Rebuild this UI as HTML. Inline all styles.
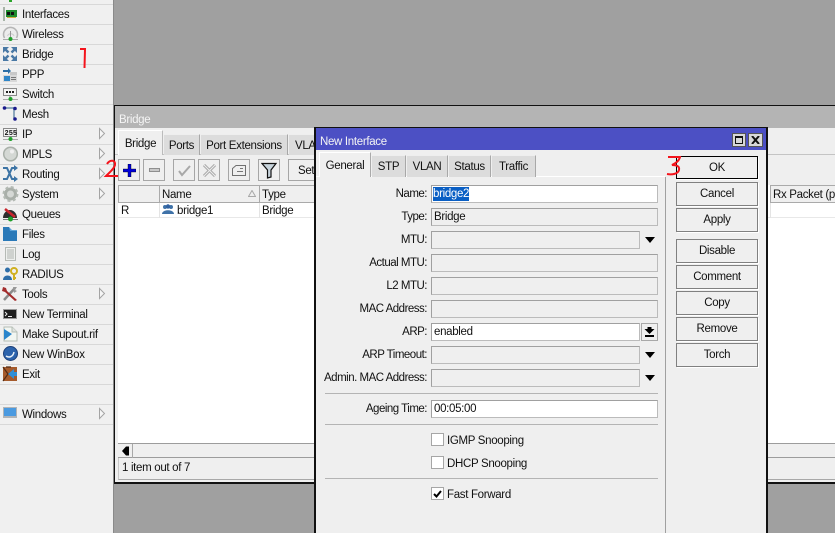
<!DOCTYPE html>
<html><head><meta charset="utf-8"><style>
html,body{margin:0;padding:0;width:835px;height:533px;overflow:hidden}
body{background:#a0a0a0;font:11.5px/14px "Liberation Sans",sans-serif;color:#111;letter-spacing:-.32px}
#r{position:absolute;left:0;top:0;width:835px;height:533px;overflow:hidden;background:#a0a0a0}
#r div{position:absolute;box-sizing:border-box;white-space:nowrap}
.m{left:22px;height:14px;margin-top:1px}
.l{left:0;width:113px;height:1px;background:#d8d8d8}
.tab{top:134px;height:21px;background:#dcdcdc;border-right:1px solid #a8a8a8;border-top:1px solid #eee;text-align:center;line-height:20px;padding-top:1px}
.tb{top:159px;width:22px;height:22px;border:1px solid #a6a6a6;background:#efefef}
.lab{right:408px;text-align:right;height:14px;margin-top:1px;letter-spacing:-.5px}
.f{left:431px;width:227px;height:18px;border:1px solid #a0a0a0;border-right-color:#bbb;border-bottom-color:#bbb;background:#efefef;padding-left:1px;line-height:16px}
.w{background:#fff}
.b{left:676px;width:82px;height:24px;border:1px solid #808080;background:#efefef;text-align:center;line-height:23px;box-shadow:1px 1px 0 #fff}
.s{left:325px;width:333px;height:1px;background:#b4b4b4}
.cb{left:431px;width:13px;height:13px;border:1px solid #a6a6a6;background:#fff}
.h{top:185px;height:18px;border-right:1px solid #aaa;border-bottom:1px solid #aaa;border-top:1px solid #aaa;background:#efefef;padding-left:2px;line-height:18px}
.arr{width:0;height:0;border-left:5px solid transparent;border-right:5px solid transparent;border-top:6px solid #000}
</style></head><body><div id="r">

<!-- sidebar -->
<div style="left:0;top:0;width:114px;height:533px;background:#f0f0f0;border-right:1px solid #8a8a8a"></div>
<div class="l" style="top:4px"></div><div class="l" style="top:24px"></div><div class="l" style="top:44px"></div><div class="l" style="top:64px"></div><div class="l" style="top:84px"></div><div class="l" style="top:104px"></div><div class="l" style="top:124px"></div><div class="l" style="top:144px"></div><div class="l" style="top:164px"></div><div class="l" style="top:184px"></div><div class="l" style="top:204px"></div><div class="l" style="top:224px"></div><div class="l" style="top:244px"></div><div class="l" style="top:264px"></div><div class="l" style="top:284px"></div><div class="l" style="top:304px"></div><div class="l" style="top:324px"></div><div class="l" style="top:344px"></div><div class="l" style="top:364px"></div><div class="l" style="top:384px"></div><div class="l" style="top:404px"></div><div class="l" style="top:424px"></div>

<div class="m" style="top:7px">Interfaces</div>
<div class="m" style="top:27px">Wireless</div>
<div class="m" style="top:47px">Bridge</div>
<div class="m" style="top:67px">PPP</div>
<div class="m" style="top:87px">Switch</div>
<div class="m" style="top:107px">Mesh</div>
<div class="m" style="top:127px">IP</div>
<div class="m" style="top:147px">MPLS</div>
<div class="m" style="top:167px">Routing</div>
<div class="m" style="top:187px">System</div>
<div class="m" style="top:207px">Queues</div>
<div class="m" style="top:227px">Files</div>
<div class="m" style="top:247px">Log</div>
<div class="m" style="top:267px">RADIUS</div>
<div class="m" style="top:287px">Tools</div>
<div class="m" style="top:307px">New Terminal</div>
<div class="m" style="top:327px">Make Supout.rif</div>
<div class="m" style="top:347px">New WinBox</div>
<div class="m" style="top:367px">Exit</div>
<div class="m" style="top:407px">Windows</div>

<svg style="position:absolute;left:0;top:0" width="114" height="430" viewBox="0 0 114 430">
 <!-- submenu arrows -->
 <g fill="#f6f6f6" stroke="#a4a4a4" stroke-width="1">
  <path d="M99.500 128.500V138.500L104.500 133.500Z"/><path d="M99.500 148.500V158.500L104.500 153.500Z"/><path d="M99.500 168.500V178.500L104.500 173.500Z"/><path d="M99.500 188.500V198.500L104.500 193.500Z"/><path d="M99.500 288.500V298.500L104.500 293.500Z"/><path d="M99.500 408.500V418.500L104.500 413.500Z"/>
 </g>
 <!-- Interfaces -->
 <rect x="3" y="7" width="2" height="14" fill="#a8b4a8"/><rect x="6" y="10" width="11" height="7" fill="#1f8a2d"/><rect x="7" y="12" width="3" height="3" fill="#111"/><rect x="11" y="12" width="3" height="3" fill="#111"/><rect x="7" y="17" width="9" height="1" fill="#d0b040"/>
 <rect x="9" y="0" width="3" height="2" fill="#2aa52a"/>
 <!-- Wireless -->
 <path d="M4.500 38A7 7 0 1 1 16.500 38" fill="#ececec" stroke="#b5b5b5" stroke-width="1.500"/><path d="M7.500 36A3.500 3.500 0 0 1 14 36" fill="none" stroke="#ccc"/><rect x="10" y="31" width="1" height="6" fill="#999"/><rect x="3" y="39" width="15" height="1" fill="#aaa"/><circle cx="10.500" cy="39" r="2" fill="#1fa02a"/>
 <!-- Bridge -->
 <g fill="#4a79a5" stroke="none"><path d="M3 47h6l-6 6z"/><path d="M17 47h-6l6 6z"/><path d="M3 61h6l-6-6z"/><path d="M17 61h-6l6-6z"/></g>
 <path d="M5 49L8.500 52.500M15 49L11.500 52.500M5 59L8.500 55.500M15 59L11.500 55.500" stroke="#4a79a5" stroke-width="2.500"/>
 <!-- PPP -->
 <path d="M3 70h5v-2l3 3-3 3v-2H3z" fill="#2c6ea6"/><rect x="3" y="75" width="14" height="7" fill="#d8d8d8"/><rect x="4" y="76" width="6" height="5" fill="#2f86c8"/><rect x="11" y="77" width="5" height="1" fill="#777"/><rect x="11" y="79" width="5" height="1" fill="#777"/><rect x="10" y="72" width="7" height="3" fill="#c8c8c8"/>
 <!-- Switch -->
 <rect x="3.500" y="88.500" width="13" height="7" fill="#f4f4f4" stroke="#888"/><path d="M6 91h2v2H6zM9 91h2v2H9zM12 91h2v2h-2z" fill="#222"/><rect x="9.500" y="96" width="1" height="3" fill="#888"/><rect x="3" y="99" width="15" height="1" fill="#aaa"/><circle cx="10.500" cy="99" r="2" fill="#1fa02a"/>
 <!-- Mesh -->
 <path d="M5 108H14V118" fill="none" stroke="#8ea8bc" stroke-width="2"/><circle cx="4.500" cy="108" r="1.800" fill="#1a1a8c"/><circle cx="15" cy="108.500" r="1.800" fill="#1a1a8c"/><circle cx="15" cy="119" r="1.800" fill="#1a1a8c"/>
 <!-- IP -->
 <rect x="3.500" y="128.500" width="13" height="8" fill="#f4f4f4" stroke="#888"/><text x="4.500" y="135" font-family="Liberation Mono,monospace" font-size="7" font-weight="bold" fill="#111" letter-spacing="0">255</text><rect x="3" y="139" width="15" height="1" fill="#aaa"/><circle cx="10.500" cy="139" r="2" fill="#1fa02a"/>
 <!-- MPLS -->
 <circle cx="10.500" cy="154" r="6.800" fill="#d4d8d4" stroke="#a9b0a9" stroke-width="1.500"/><circle cx="12" cy="151.500" r="2" fill="#f0f0f0"/>
 <!-- Routing -->
 <path d="M3 168h4l5 11h3M3 179h4l5-11h3" fill="none" stroke="#3d74a5" stroke-width="2"/><path d="M14 165l4 3-4 3zM14 176l4 3-4 3z" fill="#3d74a5"/>
 <!-- System -->
 <circle cx="10.500" cy="194" r="5" fill="#d5d8d5" stroke="#a9afa9" stroke-width="3"/><circle cx="10.500" cy="194" r="7" fill="none" stroke="#b4bab4" stroke-width="2" stroke-dasharray="3 2.500"/>
 <!-- Queues -->
 <path d="M3 218A7 8 0 0 1 17 218Z" fill="#2e2e2e"/><path d="M5 209L15 217" stroke="#c8242c" stroke-width="2.500"/><rect x="3" y="219" width="15" height="1" fill="#777"/><circle cx="10.500" cy="219" r="2.500" fill="#1fa02a"/>
 <!-- Files -->
 <path d="M3 227h6l2 3h6v11H3z" fill="#2a79b8"/><path d="M9 227l3 3h5v1H10z" fill="#5ea3d6"/>
 <!-- Log -->
 <rect x="5.500" y="247.500" width="10" height="13" fill="#eef0ee" stroke="#b5bab5"/><path d="M7 250h7M7 252h7M7 254h7M7 256h7M7 258h7" stroke="#b0b4b0"/>
 <!-- RADIUS -->
 <circle cx="7.500" cy="270" r="2.500" fill="#2f6ea8"/><path d="M3 280c0-6 9-6 9 0z" fill="#2f6ea8"/><circle cx="14" cy="271" r="3" fill="none" stroke="#d0b020" stroke-width="2"/><path d="M14 274v6M14 278h2" stroke="#d0b020" stroke-width="2"/>
 <!-- Tools -->
 <path d="M4 300L15 288" stroke="#8a8a8a" stroke-width="2.500"/><path d="M3 287l3 1 1 3 10 9-2 1-10-9-3-1z" fill="#a32c2c"/><path d="M13 287l4 0-2 3 2 1-3 2z" fill="#999"/>
 <!-- Terminal -->
 <rect x="3.500" y="309.500" width="13" height="9" fill="#1e1e1e" stroke="#9a9a9a"/><path d="M5 312l2 2-2 2" stroke="#eee" fill="none"/><rect x="8" y="316" width="4" height="1" fill="#eee"/>
 <!-- Supout -->
 <path d="M4 327h8l5 5v9H4z" fill="#f2f6f2" stroke="#b5bdb5"/><path d="M12 327v5h5" fill="#e0e4e0" stroke="#b5bdb5"/><path d="M4 329l8 5-8 6z" fill="#2a85cc"/>
 <!-- WinBox -->
 <circle cx="10.500" cy="353.500" r="7" fill="#2c63ac"/><circle cx="10.500" cy="353.500" r="7" fill="none" stroke="#1d3f78"/><path d="M6 356c3 2 7 1 8-4" fill="none" stroke="#e8f0f8" stroke-width="1.500"/>
 <!-- Exit -->
 <rect x="3" y="367" width="14" height="14" fill="#a55a2c"/><path d="M3 367l5 7-5 7M6 367l5 0" stroke="#522b14" fill="none" stroke-width="1.200"/><path d="M8 374l6-5v3h3v4h-3v3z" fill="#2e8fd8"/>
 <!-- Windows -->
 <rect x="3" y="407" width="14" height="11" fill="#b0b4b8"/><rect x="4" y="408" width="12" height="8" fill="#4b9ae0"/>
</svg>

<!-- Bridge window -->
<div style="left:114px;top:105px;width:730px;height:379px;background:#efefef;border:1px solid #111;border-bottom-width:2px"></div>
<div style="left:115px;top:106px;width:720px;height:22px;background:#b4b4b4;color:#f4f4f4;padding:7px 0 0 4px">Bridge</div>
<div style="left:115px;top:128px;width:720px;height:31px;background:#efefef"></div>
<div style="left:115px;top:154px;width:720px;height:1px;background:#c4c4c4"></div>
<div class="tab" style="left:118px;top:130px;width:45px;height:25px;background:#efefef;border:1px solid #fff;border-bottom:0;border-right:1px solid #bbb;line-height:25px">Bridge</div>
<div class="tab" style="left:164px;width:36px">Ports</div>
<div class="tab" style="left:201px;width:87px">Port Extensions</div>
<div class="tab" style="left:289px;width:30px;text-align:left;padding-left:6px">VLAN</div>

<div class="tb" style="left:118px"></div>
<svg style="position:absolute;left:123px;top:164px" width="13" height="13"><path d="M5 0h3v5h5v3H8v5H5V8H0V5h5z" fill="#0000d8" stroke="#000" stroke-width=".4"/></svg>
<div class="tb" style="left:143px"></div>
<div style="left:149px;top:168px;width:11px;height:4px;background:#c8c8c8;border:1px solid #8e8e8e"></div>
<div class="tb" style="left:173px"></div>
<svg style="position:absolute;left:178px;top:164px" width="13" height="13"><path d="M1 7l3 4 8-9" fill="none" stroke="#a8a8a8" stroke-width="2"/></svg>
<div class="tb" style="left:198px"></div>
<svg style="position:absolute;left:203px;top:164px" width="13" height="13"><path d="M1 1L12 12M12 1L1 12" fill="none" stroke="#a8a8a8" stroke-width="3"/><path d="M1 1L12 12M12 1L1 12" fill="none" stroke="#eee" stroke-width="1"/></svg>
<div class="tb" style="left:228px"></div>
<svg style="position:absolute;left:232px;top:164px" width="14" height="12"><path d="M.5 4.500L4 1.500H13.500V11.500H.5Z" fill="#efefef" stroke="#707070"/><path d="M8 4.500h3M5 7.500h6" stroke="#777"/></svg>
<div class="tb" style="left:258px"></div>
<svg style="position:absolute;left:261px;top:162px" width="16" height="17"><path d="M1 1.500H15L10 8V15L6.500 16V8Z" fill="#c8d4dc" stroke="#111" stroke-width="1.200"/></svg>
<div class="tb" style="left:288px;width:40px;padding:4px 0 0 9px;line-height:14px">Sett</div>

<!-- table -->
<div style="left:118px;top:185px;width:717px;height:258px;background:#fff"></div>
<div style="left:118px;top:443px;width:717px;height:1px;background:#9c9c9c"></div>
<div class="h" style="left:118px;width:42px;border-left:1px solid #aaa"></div>
<div class="h" style="left:160px;width:100px">Name</div>
<div class="h" style="left:260px;width:60px">Type</div>
<svg style="position:absolute;left:248px;top:190px" width="8" height="7"><path d="M4 .5L7.500 6.500H.5Z" fill="#eee" stroke="#a8a8a8"/></svg>
<div class="h" style="left:770px;width:70px;border-left:1px solid #aaa">Rx Packet (p.</div>
<div style="left:118px;top:203px;width:717px;height:15px;border-bottom:1px solid #e8e8e8"></div>
<div style="left:159px;top:203px;width:1px;height:15px;background:#e4e4e4"></div>
<div style="left:259px;top:203px;width:1px;height:15px;background:#e4e4e4"></div>
<div style="left:770px;top:203px;width:1px;height:15px;background:#e4e4e4"></div>
<div style="left:121px;top:204px">R</div>
<div style="left:177px;top:204px">bridge1</div>
<div style="left:262px;top:204px">Bridge</div>
<svg style="position:absolute;left:162px;top:204px" width="12" height="11"><circle cx="3" cy="3" r="2" fill="#3f72a8"/><circle cx="9" cy="3" r="2" fill="#3f72a8"/><circle cx="6" cy="2.500" r="2.200" fill="#2f60a0"/><path d="M0 10c0-5 12-5 12 0z" fill="#3f72a8"/></svg>

<!-- scrollbar -->
<div style="left:118px;top:444px;width:717px;height:14px;background:#efefef;border-bottom:1px solid #9c9c9c"></div>
<div style="left:118px;top:444px;width:15px;height:14px;border-right:1px solid #a8a8a8"></div>
<svg style="position:absolute;left:122px;top:446px" width="8" height="10"><path d="M0 5L4 .5H7V9.500H4Z" fill="#000"/></svg>
<div style="left:118px;top:458px;width:717px;height:22px;background:#efefef;border-bottom:1px solid #a8a8a8;border-left:1px solid #c8c8c8;padding:1px 0 0 3px;line-height:18px">1 item out of 7</div>

<!-- gray below -->
<div style="left:114px;top:484px;width:721px;height:49px;background:#a0a0a0"></div>

<!-- Dialog -->
<div style="left:314px;top:127px;width:454px;height:406px;background:#efefef;border:2px solid #111;border-top-width:1px;border-bottom:0"></div>
<div style="left:316px;top:128px;width:450px;height:22px;background:#4c50c4;color:#f4f4f4;padding:7px 0 0 4px">New Interface</div>
<div style="left:732px;top:133px;width:14px;height:14px;background:#d8d8d8;border:1px solid #555"></div>
<div style="left:735px;top:136px;width:8px;height:8px;border:1px solid #111;border-top-width:2px"></div>
<div style="left:748px;top:133px;width:15px;height:14px;background:#d8d8d8;border:1px solid #555"></div>
<svg style="position:absolute;left:751px;top:136px" width="9" height="8"><path d="M1 0L8 8M8 0L1 8" stroke="#111" stroke-width="2"/></svg>

<div style="left:316px;top:176px;width:349px;height:1px;background:#fff"></div>
<div class="tab" style="left:319px;top:152px;width:52px;height:25px;background:#efefef;border:1px solid #fff;border-bottom:0;border-right:1px solid #aaa;line-height:25px">General</div>
<div class="tab" style="left:372px;top:155px;width:34px;height:22px;line-height:21px">STP</div>
<div class="tab" style="left:407px;top:155px;width:41px;height:22px;line-height:21px">VLAN</div>
<div class="tab" style="left:449px;top:155px;width:42px;height:22px;line-height:21px">Status</div>
<div class="tab" style="left:492px;top:155px;width:44px;height:22px;line-height:21px">Traffic</div>

<div class="lab" style="top:186px">Name:</div>
<div class="lab" style="top:209px">Type:</div>
<div class="lab" style="top:232px">MTU:</div>
<div class="lab" style="top:255px">Actual MTU:</div>
<div class="lab" style="top:278px">L2 MTU:</div>
<div class="lab" style="top:301px">MAC Address:</div>
<div class="lab" style="top:324px">ARP:</div>
<div class="lab" style="top:347px">ARP Timeout:</div>
<div class="lab" style="top:370px">Admin. MAC Address:</div>
<div class="lab" style="top:401px">Ageing Time:</div>

<div class="f w" style="top:185px"><span style="background:#0a5fc4;color:#fff;display:inline-block;height:14px;line-height:14px;margin-top:1px;vertical-align:top">bridge2</span></div>
<div class="f" style="top:208px;padding-left:2px">Bridge</div>
<div class="f" style="top:231px;width:209px"></div><div class="arr" style="left:645px;top:237px"></div>
<div class="f" style="top:254px"></div>
<div class="f" style="top:277px"></div>
<div class="f" style="top:300px"></div>
<div class="f w" style="top:323px;width:209px;padding-left:2px">enabled</div>
<div style="left:641px;top:323px;width:17px;height:18px;border:1px solid #a8a8a8;background:#efefef"></div>
<svg style="position:absolute;left:644px;top:327px" width="11" height="11"><path d="M3.500 0h4v2h3L5.500 7 .5 2h3zM1 8h9v2H1z" fill="#000"/></svg>
<div class="f" style="top:346px;width:209px"></div><div class="arr" style="left:645px;top:352px"></div>
<div class="f" style="top:369px;width:209px"></div><div class="arr" style="left:645px;top:375px"></div>
<div class="s" style="top:393px"></div>
<div class="f w" style="top:400px;padding-left:2px">00:05:00</div>
<div class="s" style="top:424px"></div>
<div class="cb" style="top:433px"></div><div style="left:447px;top:434px">IGMP Snooping</div>
<div class="cb" style="top:456px"></div><div style="left:447px;top:457px">DHCP Snooping</div>
<div class="s" style="top:478px"></div>
<div class="cb" style="top:487px"></div>
<svg style="position:absolute;left:433px;top:490px" width="9" height="8"><path d="M1 4l2.500 2.500L8 1" fill="none" stroke="#000" stroke-width="2"/></svg>
<div style="left:447px;top:488px">Fast Forward</div>

<div style="left:665px;top:177px;width:1px;height:356px;background:#a0a0a0"></div>

<div class="b" style="top:156px;border-color:#000;height:23px;line-height:22px">OK</div>
<div class="b" style="top:182px">Cancel</div>
<div class="b" style="top:208px">Apply</div>
<div class="b" style="top:239px">Disable</div>
<div class="b" style="top:265px">Comment</div>
<div class="b" style="top:291px">Copy</div>
<div class="b" style="top:317px">Remove</div>
<div class="b" style="top:343px">Torch</div>

<!-- red annotations -->
<svg style="position:absolute;left:0;top:0" width="835" height="533">
 <g fill="none" stroke="#f4141c" stroke-width="2">
  <path d="M80 49H85L84.500 68"/>
  <path d="M107 164C110 159 116 160 115 165C114 169 110 172 106 176H118"/>
  <path d="M668 157H680C679 161 676 163 672 165C676 165 680 166 679 170C678 174 672 175 667 174"/>
 </g>
</svg>
</div></body></html>
